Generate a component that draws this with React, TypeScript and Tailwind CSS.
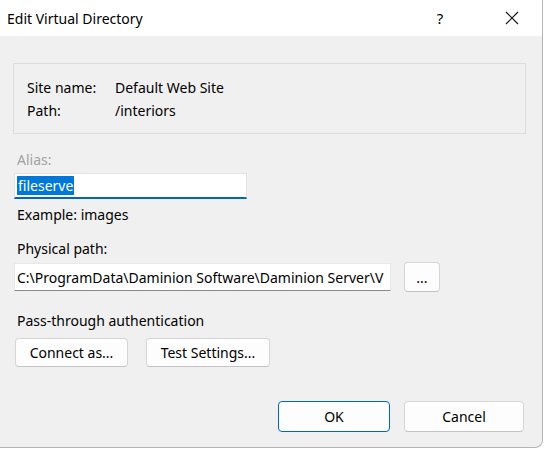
import React from 'react';

const font = { fontFamily: '"Noto Sans", "Open Sans", sans-serif' };

const Button: React.FC<{ label: string; className?: string; primary?: boolean }> = ({
  label,
  className = '',
  primary,
}) => (
  <button
    type="button"
    className={`flex items-center justify-center rounded-[4px] bg-[#fdfdfd] text-[14px] text-black border ${
      primary ? 'border-[#0067c0]' : 'border-[#d6d6d6] border-b-[#c4c4c4]'
    } ${className}`}
  >
    {label}
  </button>
);

const App: React.FC = () => {
  return (
    <div className="w-[544px] h-[449px] bg-white overflow-hidden" style={font}>
      <div className="w-[543px] h-[448px] bg-[#f0f0f0] border-r border-b border-[#b4b4b4] rounded-br-[8px] flex flex-col overflow-hidden">
        {/* title bar */}
        <div className="h-[36px] bg-white flex items-center shrink-0">
          <span className="pl-[7px] text-[14px] text-black flex-1">Edit Virtual Directory</span>
          <span className="w-[30px] text-center text-[15px] text-black mr-[50px]">?</span>
          <svg width="14" height="14" viewBox="0 0 14 14" className="mr-[23px]">
            <path d="M1 1 L13 13 M13 1 L1 13" stroke="#111" strokeWidth="1.1" />
          </svg>
        </div>

        <div className="pl-[13px] flex flex-col">
          {/* site info group */}
          <div className="mt-[27px] w-[513px] h-[71px] border border-[#dcdcdc] pl-[13px] pt-[12px] text-[14px] text-black">
            <div className="flex h-[23px] items-center">
              <span className="w-[88px]">Site name:</span>
              <span>Default Web Site</span>
            </div>
            <div className="flex h-[23px] items-center">
              <span className="w-[88px]">Path:</span>
              <span>/interiors</span>
            </div>
          </div>

          <div className="mt-[14px] pl-[4px] h-[23px] flex items-center text-[14px] text-[#a3a3a3]">Alias:</div>
          <div className="mt-[2px] ml-[1px] w-[233px] h-[26px] bg-white border border-[#e3e3e3] border-b-2 border-b-[#0067c0] flex items-center pl-[2px]">
            <span className="bg-[#0078d7] text-white text-[14px] leading-[19px] h-[19px] px-[1px]">fileserve</span>
          </div>

          <div className="mt-[4px] pl-[4px] h-[23px] flex items-center text-[14px] text-black">Example: images</div>

          <div className="mt-[11px] pl-[4px] h-[23px] flex items-center text-[14px] text-black">Physical path:</div>
          <div className="mt-[2px] flex items-center">
            <div className="ml-[1px] w-[377px] h-[28px] bg-white border border-[#e8e8e8] border-b-[#8a8a8a] flex items-center pl-[2px] overflow-hidden whitespace-nowrap text-[14px] text-black">
              C:\ProgramData\Daminion Software\Daminion Server\V
            </div>
            <Button label="..." className="ml-[13px] w-[36px] h-[30px]" />
          </div>

          <div className="mt-[17px] pl-[4px] h-[23px] flex items-center text-[14px] text-black">
            Pass-through authentication
          </div>
          <div className="mt-[6px] flex">
            <Button label="Connect as..." className="ml-[2px] w-[113px] h-[29px]" />
            <Button label="Test Settings..." className="ml-[18px] w-[124px] h-[29px]" />
          </div>

          <div className="mt-[34px] flex">
            <Button label="OK" primary className="ml-[265px] w-[112px] h-[31px] border-[#4a90d9]" />
            <Button label="Cancel" className="ml-[14px] w-[120px] h-[31px]" />
          </div>
        </div>
      </div>
    </div>
  );
};

export default App;
